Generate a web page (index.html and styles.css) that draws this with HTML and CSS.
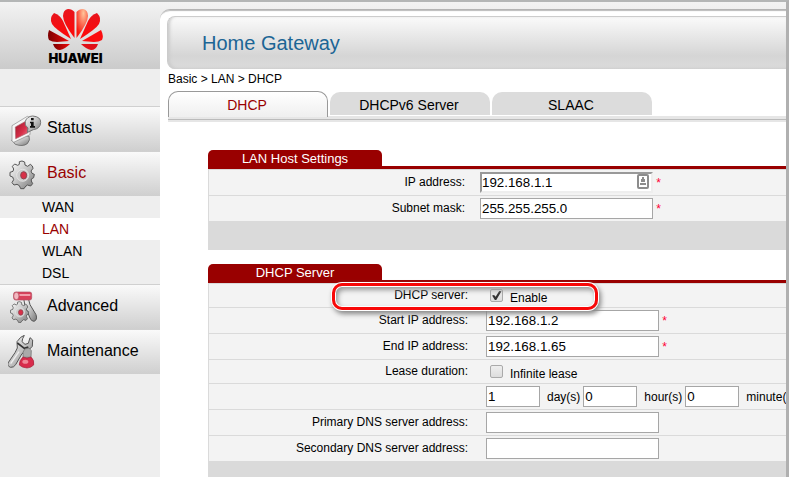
FILE: index.html
```html
<!DOCTYPE html>
<html lang="en">
<head>
	<meta charset="utf-8" />
	<title>Home Gateway</title>
	<link rel="stylesheet" href="styles.css">
</head>
<body>
<div class="page">
	<aside class="sidebar">
		<div class="logo">
			<svg width="56" height="42" viewBox="0 0 56 42">
				<defs>
					<linearGradient id="petal" x1="0" y1="0" x2="0" y2="1">
						<stop offset="0" stop-color="#e8141c"/>
						<stop offset="1" stop-color="#ff0808"/>
					</linearGradient>
					<radialGradient id="glow" cx="0.6" cy="0.15" r="0.8">
						<stop offset="0" stop-color="#ffc49a"/>
						<stop offset="1" stop-color="#f8140c"/>
					</radialGradient>
					<linearGradient id="dark" x1="0" y1="0" x2="1" y2="0">
						<stop offset="0" stop-color="#7c0000"/>
						<stop offset="1" stop-color="#f00808"/>
					</linearGradient>
				</defs>
				<path fill="url(#glow)" d="M28.500 29V3Q31 0 35 0Q40 1 40 7Q40 14 28.500 29Z"/>
				<path fill="url(#petal)" d="M32 30L40 12Q43 6 49 4Q54 9 51 15Q48 20 32 30Z"/>
				<path fill="#fb0d10" d="M34 32L53 21Q56 27 54 31Q51 33 46 33Z"/>
				<path fill="#e01018" d="M33 35H50Q48 41 43 41Q38 40 33 35Z"/>
				<path fill="url(#petal)" d="M26.500 29V3Q24 0 20 0Q15 1 15 7Q15 14 26.500 29Z"/>
				<path fill="url(#petal)" d="M23 30L15 12Q12 6 6 4Q1 9 4 15Q7 20 23 30Z"/>
				<path fill="url(#dark)" d="M21 32L1 21Q-1 27 1 31Q4 33 9 33Z"/>
				<path fill="url(#dark)" d="M22 35H5Q7 41 12 41Q17 40 22 35Z"/>
			</svg>
			<span>HUAWEI</span>
		</div>
		<nav>
			<a class="item" href="#">
				<svg viewBox="0 0 108 108">
					<defs>
						<linearGradient id="metal" x1="0" y1="0" x2="1" y2="1">
							<stop offset="0" stop-color="#fff"/>
							<stop offset="0.500" stop-color="#c4c4c4"/>
							<stop offset="1" stop-color="#777"/>
						</linearGradient>
						<linearGradient id="red" x1="0" y1="0" x2="1" y2="1">
							<stop offset="0" stop-color="#9c1428"/>
							<stop offset="0.600" stop-color="#d8304a"/>
							<stop offset="1" stop-color="#ef8090"/>
						</linearGradient>
					</defs>
					<path d="M11 84Q18 76 40 74L63 72Q68 84 58 95Q44 105 22 97Z" fill="url(#metal)" stroke="#555" stroke-width="2"/>
					<path d="M12 41L58 13L66 18V68L17 91L12 86Z" fill="#f6f6f6" stroke="#888" stroke-width="2"/>
					<path d="M22 45L60 24V62L23 80Z" fill="url(#red)" stroke="#aa6670" stroke-width="2"/>
					<path d="M74 12Q99 14 98 32Q97 50 76 53L58 61L60 48Q48 40 52 28Q57 13 74 12Z" fill="url(#metal)" stroke="#777" stroke-width="3"/>
					<path d="M69 18H77V25H69ZM66 29H77V42H81V47H66V42H69V34H66Z" fill="#111"/>
				</svg>
				Status
			</a>
			<a class="item active" href="#">
				<svg viewBox="0 0 108 108">
					<g id="gear">
						<path d="M34 14L42 12L50 15L51 24L59 28L67 22L73 27L75 34L69 42L72 49L79 52L77 62L70 66L70 72L74 80L68 87L58 84L51 90L48 95H38L34 86L27 82L18 84L12 77L17 68L14 60L6 57L6 46L15 43L17 36L13 28L20 21L29 25L34 22Z" fill="url(#metal)" stroke="#555" stroke-width="3" stroke-linejoin="round"/>
						<circle cx="44" cy="55" r="18" fill="#ccc" stroke="#f0f0f0" stroke-width="2"/>
						<ellipse cx="47" cy="55" rx="9" ry="11" fill="#d83048" stroke="#8c4450" stroke-width="3"/>
					</g>
				</svg>
				Basic
			</a>
			<ul>
				<li><a href="#">WAN</a></li>
				<li class="current"><a href="#">LAN</a></li>
				<li><a href="#">WLAN</a></li>
				<li><a href="#">DSL</a></li>
			</ul>
			<a class="item" href="#">
				<svg viewBox="0 0 108 108">
					<path d="M47 25H61L66 44L84 74Q89 90 78 94Q70 94 66 84L51 48Z" fill="url(#metal)" stroke="#555" stroke-width="3"/>
					<rect x="17" y="6" width="54" height="24" rx="6" fill="#d8405a" stroke="#b05060" stroke-width="2"/>
					<path d="M34 12H67V18H34Z" fill="#f0a0ac"/>
					<ellipse cx="25" cy="18" rx="8" ry="11" fill="#f2b8c0" stroke="#b04458" stroke-width="2"/>
					<use href="#gear" transform="translate(3 26) scale(0.750)"/>
				</svg>
				Advanced
			</a>
			<a class="item" href="#">
				<svg viewBox="0 0 108 108">
					<path d="M49 1L38 7L27 20L28 39L21 53L0 84Q-2 94 8 97Q17 98 23 89L42 56L60 47L73 34L74 15L66 8L61 25L51 28L42 20L44 11Z" fill="url(#metal)" stroke="#555" stroke-width="3" stroke-linejoin="round"/>
					<path d="M28 24L49 40L61 36" fill="none" stroke="#333" stroke-width="5"/>
					<path d="M8 86L33 50" stroke="#eee" stroke-width="4"/>
					<path d="M50 42L63 39L70 47L69 67H45V52Z" fill="#aaa" stroke="#666" stroke-width="2"/>
					<path d="M45 66Q57 72 69 66Q80 76 77 90Q68 99 57 99Q42 98 34 90Q34 75 45 66Z" fill="#d82c4c" stroke="#a02038" stroke-width="2"/>
					<ellipse cx="52" cy="80" rx="9" ry="6" fill="#ef8898"/>
				</svg>
				Maintenance
			</a>
		</nav>
	</aside>

	<main>
		<h1>Home Gateway</h1>
		<div class="breadcrumb">Basic &gt; LAN &gt; DHCP</div>
		<nav class="tabs">
			<a class="active" href="#">DHCP</a>
			<a href="#">DHCPv6 Server</a>
			<a href="#">SLAAC</a>
		</nav>

		<section>
			<h2><span>LAN Host Settings</span></h2>
			<table class="host">
				<tr>
					<th><label for="ip">IP address:</label></th>
					<td>
						<span class="field">
							<input class="focused" type="text" id="ip" value="192.168.1.1">
							<svg width="12" height="15" viewBox="0 0 12 15">
								<rect x="1" y="1" width="10" height="13" rx="1" fill="#fff" stroke="#8c8c8c" stroke-width="2"/>
								<path d="M5 3H7V5H8V8H4V5H5ZM3 9H9V11H3Z" fill="#8c8c8c"/>
							</svg>
						</span>
						<span class="req">*</span>
					</td>
				</tr>
				<tr>
					<th><label for="mask">Subnet mask:</label></th>
					<td><input type="text" id="mask" value="255.255.255.0"> <span class="req">*</span></td>
				</tr>
			</table>
			<div class="foot"></div>
		</section>

		<section>
			<h2><span>DHCP Server</span></h2>
			<table class="dhcp">
				<tr class="short">
					<th><label for="dhcp">DHCP server:</label></th>
					<td>
						<div class="check"><input type="checkbox" id="dhcp" checked><label for="dhcp">Enable</label></div>
						<div class="highlight"></div>
					</td>
				</tr>
				<tr>
					<th><label for="start">Start IP address:</label></th>
					<td><input type="text" id="start" value="192.168.1.2"> <span class="req">*</span></td>
				</tr>
				<tr>
					<th><label for="end">End IP address:</label></th>
					<td><input type="text" id="end" value="192.168.1.65"> <span class="req">*</span></td>
				</tr>
				<tr class="short">
					<th><label for="lease">Lease duration:</label></th>
					<td><div class="check"><input type="checkbox" id="lease"><label for="lease">Infinite lease</label></div></td>
				</tr>
				<tr>
					<th></th>
					<td>
						<div class="time">
							<input type="text" id="days" value="1"><label for="days">day(s)</label>
							<input type="text" id="hours" value="0"><label for="hours">hour(s)</label>
							<input type="text" id="minutes" value="0"><label for="minutes">minute(</label>
						</div>
					</td>
				</tr>
				<tr>
					<th><label for="dns1">Primary DNS server address:</label></th>
					<td><input type="text" id="dns1"></td>
				</tr>
				<tr>
					<th><label for="dns2">Secondary DNS server address:</label></th>
					<td><input type="text" id="dns2"></td>
				</tr>
			</table>
			<div class="foot"></div>
		</section>
	</main>
</div>
</body>
</html>
```
FILE: styles.css
```css
* {
	box-sizing: border-box;
}

html {
	height: 100%;
	overflow: hidden;
}

body {
	margin: 0;
	height: 100%;
	overflow: hidden;
	font-family: "Liberation Sans", Arial, sans-serif;
	font-size: 12px;
	color: #000;
	background: #eee;
}

a {
	color: #000;
	text-decoration: none;
}

.page {
	display: flex;
	min-height: 100%;
	border-top: 2px solid #b4b6b6;
	border-right: 3px solid #b0b0b0;
	background: linear-gradient(#f3f3f3, #cbcbcb) 0 0 / 100% 67px no-repeat, #eee;
}

/* left menu */
.sidebar {
	flex: none;
	width: 160px;
}

.logo {
	display: flex;
	flex-direction: column;
	align-items: center;
	height: 104px;
	padding: 7px 9px 0 0;
}

.logo span {
	font-family: Inter, "Liberation Sans", sans-serif;
	font-size: 13px;
	font-weight: 900;
	line-height: 14px;
}

.item {
	display: flex;
	align-items: center;
	height: 45px;
	padding: 0 8px 2px;
	gap: 3px;
	font-size: 16px;
	border-top: 1px solid #d0d0d0;
	background: linear-gradient(#fafafa, #cfcfcf);
}

.item svg {
	width: 36px;
	height: 36px;
	margin-top: 4px;
}

.item.active,
.current a {
	color: #900;
}

.sidebar ul {
	list-style: none;
	margin: 0;
	padding: 0;
}

.sidebar li {
	padding-left: 42px;
	font-size: 14px;
	line-height: 22px;
}

.current {
	background: #fff;
}

/* content */
main {
	flex: 1;
	min-width: 0;
	margin-top: 7px;
	padding: 6px 0 0 7px;
	overflow: hidden;
	background: #fff;
	border-top: 1px solid #b4b4b4;
	border-top-left-radius: 10px;
	box-shadow: inset 0 2px 1px -1px #bbb;
}

h1 {
	height: 53px;
	margin: 0;
	padding-left: 34px;
	font-size: 20px;
	font-weight: normal;
	line-height: 52px;
	color: #1c6595;
	border: 1px solid #ccc;
	border-width: 1px 0 0 1px;
	border-radius: 8px 0 0 8px;
	background: linear-gradient(#fafafa, #d5d5d5 75%, #dcdcdc);
	box-shadow: inset 2px -1px 3px #ccc;
}

.breadcrumb {
	height: 22px;
	padding-left: 1px;
	line-height: 20px;
}

.tabs {
	display: flex;
	align-items: flex-start;
	gap: 2px;
	height: 31px;
	margin-left: 1px;
	background: linear-gradient(#e6e6e6 3px, #bbb 3px, #bbb 4px, #e6e6e6 4px) 0 25px / 100% 6px no-repeat;
}

.tabs a {
	width: 160px;
	height: 23px;
	margin-top: 1px;
	padding-right: 2px;
	font-size: 14px;
	line-height: 26px;
	text-align: center;
	border-radius: 10px 10px 0 0;
	background: #dcdcdc;
}

.tabs .active {
	height: 26px;
	margin-top: 0;
	color: #900;
	border: 1px solid #999;
	border-bottom: 0;
	background: linear-gradient(#fff, #efefef);
}

section {
	margin: 28px 0 0 41px;
}

section + section {
	margin-top: 14px;
}

h2 {
	margin: 0;
	border-bottom: 3px solid #900;
	font-size: 13px;
	font-weight: normal;
	line-height: 16px;
	color: #fff;
}

h2 span {
	display: block;
	width: 174px;
	height: 16px;
	padding-top: 1px;
	text-align: center;
	border-radius: 5px 5px 0 0;
	background: #900;
}

table {
	width: 100%;
	table-layout: fixed;
	border-spacing: 0;
	border-left: 1px solid #dadada;
}

th,
td {
	height: 26px;
	padding: 0;
	border-top: 1px solid #dadada;
	background: #f3f3f3;
	white-space: nowrap;
}

th {
	width: 271px;
	padding: 0 15px 2px 0;
	font-weight: normal;
	text-align: right;
}

.dhcp th {
	width: 277px;
	padding-right: 18px;
}

.short th,
.short td {
	height: 24px;
}

input {
	font-family: inherit;
}

input[type="text"] {
	width: 173px;
	height: 21px;
	padding: 0 1px;
	border: 1px solid #a6a6a6;
	background: #fff;
}

input[type="text"].focused {
	padding: 0;
	border: 2px solid;
	border-color: #999 #eee #eee #999;
}

.field {
	position: relative;
}

.field svg {
	position: absolute;
	top: -2px;
	right: 7px;
}

.req {
	color: #f03;
}

.time {
	display: flex;
	align-items: center;
	gap: 3px;
}

.time input[type="text"] {
	width: 54px;
	margin-right: 4px;
}

.short td {
	position: relative;
}

.check {
	display: flex;
	align-items: flex-end;
	gap: 7px;
	padding: 3px 0 0 4px;
}

.check input {
	display: flex;
	appearance: none;
	width: 13px;
	height: 13px;
	margin: 0 0 3px;
	border: 1px solid #aaa;
	border-radius: 2px;
	background: linear-gradient(#eee, #ddd);
}

.check input:checked::after {
	content: "";
	width: 11px;
	height: 11px;
	background: #333;
	clip-path: polygon(10% 50%, 28% 45%, 42% 62%, 75% 8%, 95% 12%, 48% 92%, 35% 92%);
}

.check label {
	line-height: 14px;
}

/* red frame round the DHCP switch */
.highlight {
	position: absolute;
	top: -1px;
	left: -154px;
	width: 266px;
	height: 27px;
	border: 3px solid #f80808;
	border-radius: 10px;
	box-shadow: 0 0 0 1px #fff, inset 0 0 0 1px #fff, 2px 3px 5px 1px #888, inset 2px 3px 5px 1px #999;
	pointer-events: none;
}

.foot {
	height: 29px;
	background: #dadada;
}
```
